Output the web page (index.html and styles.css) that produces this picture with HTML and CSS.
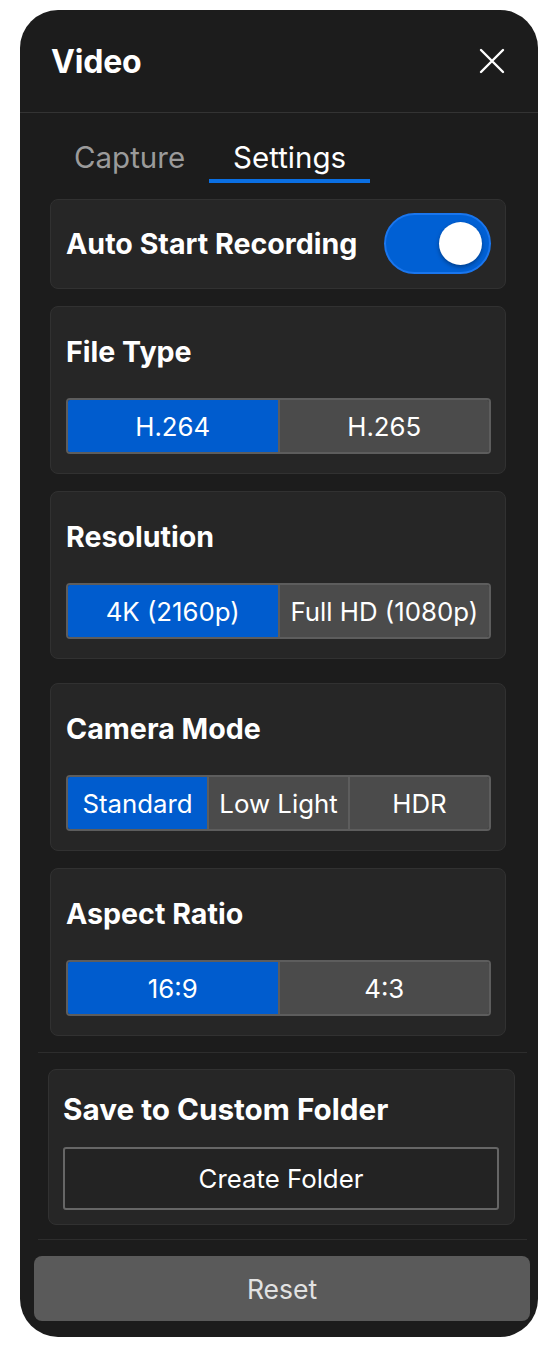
FILE: index.html
```html
<!DOCTYPE html>
<html lang="en">
<head>
<meta charset="utf-8">
<title>Video Settings</title>
<link rel="stylesheet" href="styles.css">
</head>
<body>
<div class="panel">
  <header class="header">
    <h1 class="title">Video</h1>
    <button class="close" aria-label="Close">
      <svg width="26" height="26" viewBox="0 0 26 26"><path d="M2 2 L24 24 M24 2 L2 24" stroke="#fff" stroke-width="2.4" stroke-linecap="round" fill="none"/></svg>
    </button>
  </header>
  <nav class="tabs">
    <div class="tab">Capture</div>
    <div class="tab tab--active">Settings</div>
  </nav>
  <main class="content">
    <section class="card card--row">
      <span class="card-title">Auto Start Recording</span>
      <div class="toggle"><span class="knob"></span></div>
    </section>
    <section class="card">
      <div class="card-title">File Type</div>
      <div class="seg">
        <div class="seg-item seg-item--on">H.264</div>
        <div class="seg-item">H.265</div>
      </div>
    </section>
    <section class="card">
      <div class="card-title">Resolution</div>
      <div class="seg">
        <div class="seg-item seg-item--on">4K (2160p)</div>
        <div class="seg-item">Full HD (1080p)</div>
      </div>
    </section>
    <section class="card card--spaced">
      <div class="card-title">Camera Mode</div>
      <div class="seg">
        <div class="seg-item seg-item--on">Standard</div>
        <div class="seg-item">Low Light</div>
        <div class="seg-item">HDR</div>
      </div>
    </section>
    <section class="card">
      <div class="card-title">Aspect Ratio</div>
      <div class="seg">
        <div class="seg-item seg-item--on">16:9</div>
        <div class="seg-item">4:3</div>
      </div>
    </section>
  </main>
  <div class="divider"></div>
  <section class="folder">
    <div class="card-title card-title--lg">Save to Custom Folder</div>
    <button class="create">Create Folder</button>
  </section>
  <div class="divider divider--b"></div>
  <div class="footer">
    <button class="reset">Reset</button>
  </div>
</div>
</body>
</html>
```

FILE: styles.css
```css
* { box-sizing: border-box; }
html, body { margin: 0; padding: 0; background: #fff; }
body { font-family: Inter, "Noto Sans", sans-serif; color: #fff; }

.panel {
  margin: 10px 0 0 20px;
  width: 518px;
  height: 1327px;
  background: #1c1c1c;
  border-radius: 38px;
  overflow: hidden;
  display: flex;
  flex-direction: column;
}

.header {
  height: 103px;
  flex: none;
  display: flex;
  align-items: center;
  justify-content: space-between;
  padding: 0 33px 0 31px;
  border-bottom: 1px solid #333;
}
.title {
  margin: 0;
  font-size: 32px;
  font-weight: 700;
  letter-spacing: -0.2px;
  line-height: 1;
  padding-top: 2px;
}
.close {
  background: none;
  border: 0;
  padding: 0;
  width: 26px;
  height: 26px;
  display: flex;
}

.tabs {
  display: flex;
  padding: 0 0 0 30px;
  flex: none;
}
.tab {
  font-size: 29.5px;
  line-height: 34px;
  padding: 27px 24px 5px;
  color: #9b9b9b;
  border-bottom: 4px solid transparent;
}
.tab--active {
  color: #fff;
  border-bottom-color: #0a6fe3;
}

.content {
  display: flex;
  flex-direction: column;
  gap: 17px;
  padding: 16px 32px 0 30px;
}

.card {
  background: #262626;
  border: 1px solid #313131;
  border-radius: 8px;
  padding: 28px 14px 19px 15px;
}
.card--spaced { margin-top: 7px; }
.card--row {
  display: flex;
  align-items: center;
  justify-content: space-between;
  padding: 13px 14px 14px 15px;
}
.card-title {
  font-size: 28.6px;
  font-weight: 700;
  line-height: 34px;
  color: #fff;
}
.card-title--lg { font-size: 29.7px; }
.card > .card-title { margin-bottom: 29px; }
.card--row > .card-title { margin-bottom: 0; }

.toggle {
  width: 107px;
  height: 61px;
  border-radius: 31px;
  background: #0060d4;
  border: 2px solid #1a76ee;
  display: flex;
  align-items: center;
  justify-content: flex-end;
  padding-right: 7px;
}
.knob {
  width: 43px;
  height: 43px;
  border-radius: 50%;
  background: #fff;
  box-shadow: 0 2px 4px rgba(0,0,0,0.35);
}

.seg {
  display: flex;
  height: 56px;
  border: 2px solid #5d5d5d;
  border-radius: 4px;
  overflow: hidden;
}
.seg-item {
  flex: 1 1 0;
  display: flex;
  align-items: center;
  justify-content: center;
  background: #4b4b4b;
  font-size: 25.8px;
  color: #fff;
  white-space: nowrap;
}
.seg-item + .seg-item { border-left: 2px solid #5d5d5d; }
.seg-item--on { background: #005cce; }

.divider {
  height: 1px;
  background: #2d2d2d;
  margin: 16px 11px 0 18px;
  flex: none;
}
.divider--b { margin-top: 14px; }

.folder {
  margin: 16px 23px 0 28px;
  background: #262626;
  border: 1px solid #313131;
  border-radius: 8px;
  padding: 22px 15px 14px 14px;
}
.folder > .card-title { margin-bottom: 21px; }
.create {
  display: block;
  width: 100%;
  height: 63px;
  background: #232323;
  border: 2px solid #666;
  border-radius: 3px;
  color: #fff;
  font-family: inherit;
  font-size: 25.8px;
}

.footer {
  padding: 16px 8px 0 14px;
}
.reset {
  display: block;
  width: 100%;
  height: 65px;
  background: #5a5a5a;
  border: 0;
  border-radius: 8px;
  color: #e2e2e2;
  font-family: inherit;
  font-size: 26.5px;
}
```
